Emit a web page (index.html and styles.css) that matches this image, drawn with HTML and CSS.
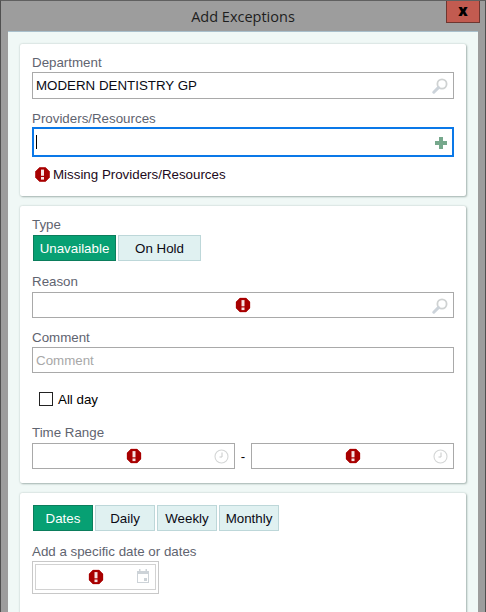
FILE: index.html
```html
<!DOCTYPE html>
<html lang="en">
<head>
<meta charset="utf-8">
<title>Add Exceptions</title>
<link rel="stylesheet" href="styles.css">
</head>
<body>
<svg class="defs" width="0" height="0" aria-hidden="true">
  <symbol id="err" viewBox="0 0 15 15">
    <path d="M4.5 0.5h6l4 4v6l-4 4h-6l-4-4v-6z" fill="#a80000" stroke="#a80000" stroke-width="0.6"/>
    <rect x="6" y="2.6" width="3" height="6.2" fill="#f6e4e4"/>
    <rect x="6" y="10" width="3" height="2.6" fill="#f6e4e4"/>
  </symbol>
  <symbol id="search" viewBox="0 0 16 16">
    <circle cx="10" cy="6" r="4.6" fill="none" stroke="#cfd2d2" stroke-width="1.8"/>
    <path d="M6.4 9.6L1.8 14.2" stroke="#ccd3da" stroke-width="3" stroke-linecap="round"/>
  </symbol>
  <symbol id="clock" viewBox="0 0 15 15">
    <circle cx="7.5" cy="7.5" r="6.5" fill="none" stroke="#d4d6d6" stroke-width="1.1"/>
    <path d="M8 3.5V8H5.5" fill="none" stroke="#c8caca" stroke-width="1"/>
  </symbol>
  <symbol id="cal" viewBox="0 0 12 14">
    <path d="M0 2h12v12H0z" fill="#cdd3d8"/>
    <path d="M2 0h1.5v3H2zM8.5 0H10v3H8.5z" fill="#cdd3d8"/>
    <path d="M1 5h10v8H1z" fill="#fff"/>
    <path d="M7 9h3v3H7z" fill="#cdd3d8"/>
  </symbol>
</svg>
<div class="window">
  <header class="titlebar">
    <h1 class="title">Add Exceptions</h1>
    <button class="close" type="button">x</button>
  </header>
  <main class="content">
    <section class="card card-dept">
      <label class="label">Department</label>
      <div class="field field-dept">
        <span class="value">MODERN DENTISTRY GP</span>
        <svg class="icon-search"><use href="#search"/></svg>
      </div>
      <label class="label label-prov">Providers/Resources</label>
      <div class="field field-focus">
        <span class="caret"></span>
        <span class="plus"></span>
      </div>
      <div class="error-line">
        <svg class="icon-err"><use href="#err"/></svg>
        <span>Missing Providers/Resources</span>
      </div>
    </section>
    <section class="card card-type">
      <label class="label">Type</label>
      <div class="btns">
        <span class="btn btn-on btn-type">Unavailable</span>
        <span class="btn btn-type">On Hold</span>
      </div>
      <label class="label label-reason">Reason</label>
      <div class="field field-std">
        <svg class="icon-err centered"><use href="#err"/></svg>
        <svg class="icon-search"><use href="#search"/></svg>
      </div>
      <label class="label label-comment">Comment</label>
      <div class="field field-std field-comment">
        <span class="placeholder">Comment</span>
      </div>
      <div class="check-row">
        <span class="check"></span>
        <span>All day</span>
      </div>
      <label class="label label-time">Time Range</label>
      <div class="range">
        <div class="field field-std field-time">
          <svg class="icon-err centered"><use href="#err"/></svg>
          <svg class="icon-clock"><use href="#clock"/></svg>
        </div>
        <span class="dash">-</span>
        <div class="field field-std field-time">
          <svg class="icon-err centered"><use href="#err"/></svg>
          <svg class="icon-clock"><use href="#clock"/></svg>
        </div>
      </div>
    </section>
    <section class="card card-dates">
      <div class="btns">
        <span class="btn btn-on btn-date">Dates</span>
        <span class="btn btn-date">Daily</span>
        <span class="btn btn-date">Weekly</span>
        <span class="btn btn-date">Monthly</span>
      </div>
      <label class="label label-add">Add a specific date or dates</label>
      <div class="date-outer">
        <div class="date-inner">
          <svg class="icon-err centered"><use href="#err"/></svg>
          <svg class="icon-cal"><use href="#cal"/></svg>
        </div>
      </div>
    </section>
  </main>
</div>
</body>
</html>
```
FILE: styles.css
```css
* { box-sizing: border-box; }
html, body { margin: 0; height: 100%; overflow: hidden; }
body { font-family: "Liberation Sans", Arial, sans-serif; font-size: 13.33px; color: #000; }
.defs { position: absolute; }
.window {
  width: 486px; height: 612px; background: #9d9d9d;
  border: 1px solid #505050; border-bottom: 0; border-top-color: #606060;
  display: flex; flex-direction: column; overflow: hidden;
}
.titlebar { height: 30px; flex: none; display: flex; justify-content: center; align-items: center; position: relative; padding-top: 1px; }
.title { margin: 0; font: 400 14.5px/20px "Open Sans", sans-serif; color: #1e1e1e; }
.close {
  position: absolute; top: 0; right: 5px; width: 34px; height: 22px; padding: 0 0 4px;
  background: #c25b50; border: 1px solid #6e3630; border-top: 0;
  font: 800 15px/16px "Open Sans", sans-serif; color: #000;
}
.content {
  flex: 1; margin: 0 7px; background: #f0f8f6; border-top: 1px solid #a9c0cc;
  padding: 12px 12px 0; display: flex; flex-direction: column; gap: 10px; overflow: hidden;
}
.card {
  flex: none; background: #fff; padding: 0 12px; border-radius: 2px;
  box-shadow: 0 0 2px rgba(120,140,135,.45), 1px 1px 2px rgba(120,140,135,.55);
}
.card-dept { height: 152px; padding-top: 10px; }
.card-type { height: 277px; padding-top: 10px; }
.card-dates { height: 130px; padding-top: 12px; }
.label { display: block; height: 16px; padding-top: 1px; line-height: 16px; color: #5f6470; }
.field {
  position: relative; display: flex; align-items: center; width: 100%;
  border: 1px solid #a9a9a9; background: #fff;
}
.field-dept { height: 27px; margin-top: 2px; padding-left: 3px; }
.value { color: #0a0a14; }
.label-prov { margin-top: 11px; }
.field-focus { height: 30px; margin-top: 1px; border: 2px solid #0a78e8; padding-left: 2px; }
.caret { width: 1px; height: 14px; background: #000; }
.plus {
  position: absolute; right: 5px; top: 8px; width: 12px; height: 12px;
  background:
    linear-gradient(#76a88c, #76a88c) center / 12px 4px no-repeat,
    linear-gradient(#76a88c, #76a88c) center / 4px 12px no-repeat;
}
.icon-search { position: absolute; right: 5px; top: 5px; width: 16px; height: 16px; }
.icon-err { width: 15px; height: 15px; flex: none; }
.centered { position: absolute; left: 50%; top: 50%; transform: translate(-50%, -50%); }
.icon-clock { position: absolute; right: 5px; top: 5px; width: 15px; height: 15px; }
.error-line { display: flex; align-items: center; gap: 3px; margin-top: 9px; padding-left: 3px; height: 16px; color: #1c0a20; }
.btns { display: flex; gap: 2px; padding-left: 1px; }
.btn {
  height: 26px; display: flex; align-items: center; justify-content: center;
  background: #e0f1f1; border: 1px solid #bdd7d9; color: #0a0a14;
}
.btn-on { background: #07a073; border-color: #0b7d5c; color: #fff; }
.btn-type { width: 83px; }
.btn-date { width: 60px; }
.card-type .btns { margin-top: 3px; }
.label-reason { margin-top: 12px; }
.field-std { height: 26px; margin-top: 3px; padding-left: 3px; }
.label-comment { margin-top: 11px; }
.field-comment { margin-top: 2px; }
.placeholder { color: #a8a8a8; }
.check-row { display: flex; align-items: center; gap: 5px; margin-top: 18px; padding-left: 7px; height: 16px; }
.check { width: 14px; height: 14px; border: 1px solid #222; background: #fff; }
.label-time { margin-top: 17px; }
.range { display: flex; align-items: center; margin-top: 3px; }
.field-time { width: 203px; margin-top: 0; }
.dash { width: 16px; text-align: center; }
.label-add { margin-top: 12px; }
.date-outer { width: 127px; height: 33px; margin-top: 2px; border: 1px solid #c8c8c8; padding: 2px 2px 3px; }
.date-inner { position: relative; height: 100%; border: 1px solid #d2d2d2; }
.icon-cal { position: absolute; right: 6px; top: 4px; width: 12px; height: 14px; }
```
